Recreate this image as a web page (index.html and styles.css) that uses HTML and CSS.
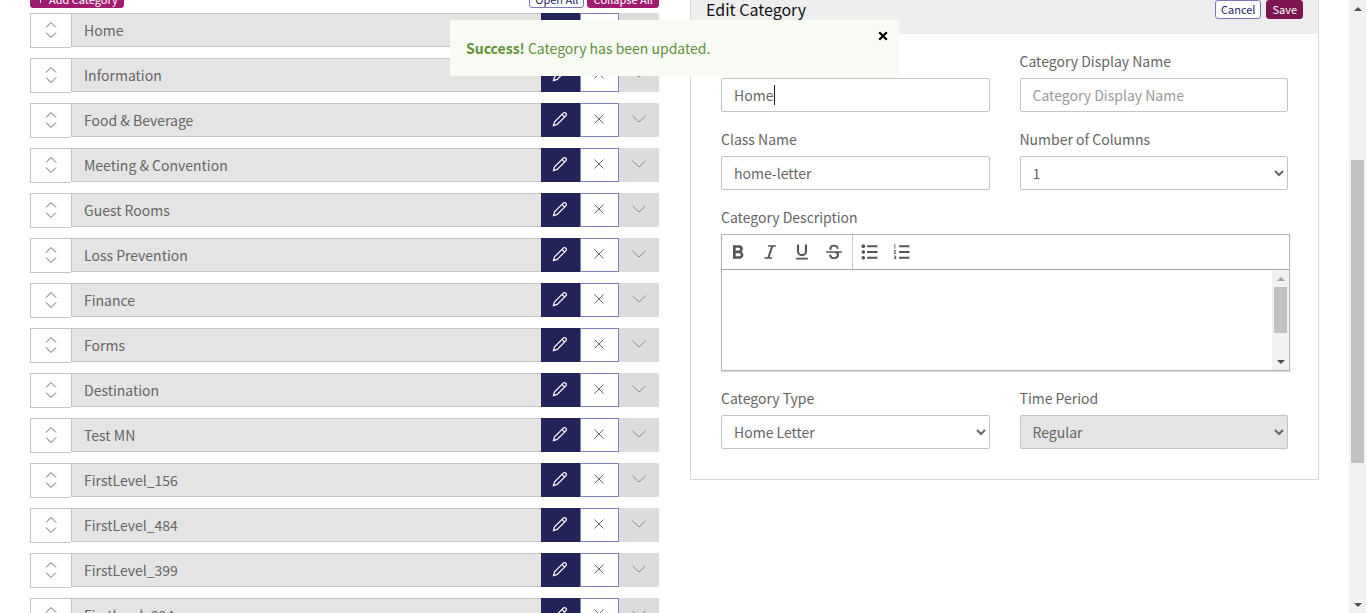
FILE: index.html
```html
<!DOCTYPE html>
<html lang="en">
<head>
<meta charset="utf-8">
<title>Edit Category</title>
<link rel="stylesheet" href="styles.css">
<script src="app.js" defer></script>
</head>
<body>
<svg class="sprite" aria-hidden="true">
  <symbol id="i-sort" viewBox="0 0 12 18"><path d="M1 6.500 6 1.500l5 5M1 11.500l5 5 5-5"/></symbol>
  <symbol id="i-pencil" viewBox="0 0 16 16"><path d="M1.500 14.500 2.600 10.800 11.200 2.200Q12.500.9 13.800 2.200 15.100 3.500 13.800 4.800L5.200 13.400ZM10 3.400l2.600 2.600"/></symbol>
  <symbol id="i-cross" viewBox="0 0 10 10"><path d="m.5.5 9 9M9.500.5l-9 9"/></symbol>
  <symbol id="i-down" viewBox="0 0 14 8"><path d="m.5.8 6.500 6.200L13.500.8"/></symbol>
</svg>
<div class="shell">
  <main class="columns">
    <section class="categories">
      <div class="toolbar">
        <button class="btn btn-magenta" type="button"><svg class="plus" viewBox="0 0 10 10"><path d="M5 0v10M0 5h10"/></svg>Add Category</button>
        <span class="toolbar-right">
          <button class="btn btn-outline" type="button">Open All</button>
          <button class="btn btn-magenta" type="button">Collapse All</button>
        </span>
      </div>
      <ul class="list" id="list"></ul>
    </section>
    <form class="panel">
      <header class="panel-head">
        <h2 class="panel-title">Edit Category</h2>
        <button class="btn btn-outline" type="button">Cancel</button>
        <button class="btn btn-plum" type="button">Save</button>
      </header>
      <div class="panel-body">
        <div class="field">
          <label for="name">Category Name</label>
          <span class="input-wrap"><input class="control" id="name" value="Home"><i class="caret"></i></span>
        </div>
        <div class="field">
          <label for="display">Category Display Name</label>
          <input class="control" id="display" placeholder="Category Display Name">
        </div>
        <div class="field">
          <label for="cls">Class Name</label>
          <input class="control" id="cls" value="home-letter">
        </div>
        <div class="field">
          <label for="cols">Number of Columns</label>
          <select class="control" id="cols"><option>1</option></select>
        </div>
        <div class="field field-wide">
          <label for="desc">Category Description</label>
          <div class="editor">
            <div class="editor-bar">
              <button type="button" class="tool" aria-label="Bold"><svg viewBox="0 0 24 24"><path d="M16.200 11.600c1-.8 1.600-1.900 1.600-3.100A4.500 4.500 0 0 0 13.300 4H6v16h8.200c2.400 0 4.200-1.900 4.200-4.300 0-1.800-.8-3.300-2.200-4.100zM9.200 6.800h3.600a1.700 1.700 0 0 1 0 3.500H9.200V6.800zm4.200 10.400H9.200v-3.800h4.200a1.900 1.900 0 0 1 0 3.800z"/></svg></button>
              <button type="button" class="tool" aria-label="Italic"><svg viewBox="0 0 24 24"><path d="M9.500 4v1.800h3.600L9 18.200H5.500V20h9v-1.800h-3l4.200-12.400H19V4z"/></svg></button>
              <button type="button" class="tool" aria-label="Underline"><svg viewBox="0 0 24 24"><path d="M12 17c3.300 0 6-2.700 6-6V3h-2.500v8a3.500 3.500 0 0 1-7 0V3H6v8c0 3.300 2.700 6 6 6zm-7 2v2h14v-2H5z"/></svg></button>
              <button type="button" class="tool" aria-label="Strikethrough"><svg viewBox="0 0 24 24"><path d="M6.600 9.200C5.700 5.800 8.300 3.300 12 3.300c3.300 0 5.700 1.900 5.700 4.900h-2.500c0-1.700-1.300-2.700-3.200-2.700-3.200 0-3.900 2.700-2 3.700H6.600zM21.500 13v-2h-19v2h10.200c1.900.6 2.800 1.300 2.800 2.700 0 1.500-1.300 2.500-3.300 2.500-2.200 0-3.500-1-3.600-3H6.100c0 3.500 2.800 5.300 6.100 5.300 3.500 0 5.900-1.900 5.900-4.800 0-1-.2-1.900-.7-2.700h4.100z"/></svg></button>
              <i class="divider"></i>
              <button type="button" class="tool" aria-label="Bulleted list"><svg viewBox="0 0 24 24"><circle cx="4" cy="5" r="2.200"/><circle cx="4" cy="12" r="2.200"/><circle cx="4" cy="19" r="2.200"/><path d="M8.500 3.800H21v2.400H8.500zM8.500 10.800H21v2.400H8.500zM8.500 17.800H21v2.400H8.500z"/></svg></button>
              <button type="button" class="tool" aria-label="Numbered list"><svg viewBox="0 0 24 24"><path d="M2 17.500h2v.5H3v1h1v.5H2v1h3v-4H2v1zm1-9.500h1V3H2v1h1v4zm-1 3h1.800L2 13.100v.9h3v-1H3.200L5 10.900V10H2v1zm6.500-7.200v2.400H21V3.800H8.500zm0 16.400H21v-2.400H8.500v2.400zm0-7H21v-2.400H8.500v2.400z"/></svg></button>
            </div>
            <div class="editor-main">
              <textarea class="editor-text" id="desc"></textarea>
              <div class="scrollbar" aria-hidden="true"><i class="arrow arrow-up arrow-off"></i><i class="thumb thumb-short"></i><i class="arrow arrow-down"></i></div>
            </div>
          </div>
        </div>
        <div class="field">
          <label for="type">Category Type</label>
          <select class="control" id="type"><option>Home Letter</option></select>
        </div>
        <div class="field">
          <label for="period">Time Period</label>
          <select class="control" id="period" disabled><option>Regular</option></select>
        </div>
      </div>
    </form>
  </main>
  <div class="scrollbar" aria-hidden="true"><i class="arrow arrow-up"></i><i class="track-before"></i><i class="thumb thumb-page"></i><i class="arrow arrow-down"></i></div>
</div>
<div class="toast" role="status">
  <p class="toast-text"><strong>Success!</strong> Category has been updated.</p>
  <button class="toast-close" type="button" aria-label="Close"><svg viewBox="0 0 10 10"><path d="m1.200 1.200 7.600 7.600M8.800 1.200 1.200 8.800"/></svg></button>
</div>
</body>
</html>
```
FILE: styles.css
```css
* { box-sizing: border-box; }
body {
  margin: 0;
  height: 100vh;
  overflow: hidden;
  background: #fff;
  color: #666;
  font: 14px/24px "Noto Sans CJK SC", "Open Sans", sans-serif;
}
button, input, select, textarea { font: inherit; color: inherit; margin: 0; }
button { cursor: pointer; }
svg { fill: none; stroke: currentColor; display: block; }
.sprite { display: none; }

.shell { display: grid; grid-template-columns: 1fr 17px; grid-template-rows: 100%; height: 100vh; overflow: hidden; }
.columns {
  display: grid;
  grid-template-columns: 1fr 1fr;
  gap: 31px;
  align-items: start;
  padding: 0 30px;
  min-width: 0;
}

/* buttons */
.btn {
  display: inline-flex;
  align-items: center;
  height: 19px;
  padding: 0 5px;
  border: 1px solid;
  border-radius: 3px;
  font-size: 11px;
  line-height: 16px;
  white-space: nowrap;
}
.btn-magenta { background: #a01c6e; border-color: #a01c6e; color: #fff; }
.btn-plum { background: #7d1550; border-color: #7d1550; color: #fff; }
.btn-outline { background: #fff; border-color: #7a78b4; color: #252460; }
.plus { width: 9px; height: 9px; margin-right: 4px; }

/* category list; the page is scrolled past the top of the toolbar */
.categories { margin-top: -11px; }
.toolbar { display: flex; justify-content: space-between; margin-bottom: 5px; }
.toolbar-right { display: flex; gap: 3px; }
.list { list-style: none; margin: 0; padding: 0; display: grid; gap: 10px; }
.row { display: grid; grid-template-columns: 41px 1fr 39px 39px 40px; height: 35px; align-items: start; }
.row > * { height: 34px; display: flex; align-items: center; justify-content: center; padding: 0 0 2px; border: 1px solid #c4c4c4; }
.row > .handle { height: 35px; background: #fff; border-right: 0; }
.handle svg { width: 12px; height: 18px; }
.row > .name { justify-content: flex-start; padding: 0 0 0 12px; background: #e4e4e4; border-right: 0; }
.row > .edit { padding-right: 2px; background: #232259; border-color: #232259; color: #fff; }
.edit svg { width: 16px; height: 16px; stroke-width: 1.2; }
.row > .remove { padding-right: 2px; background: #fff; border-color: #8280b8; color: #55555f; }
.remove svg { width: 10px; height: 10px; stroke-width: 0.9; }
.row > .toggle { background: #dcdcdc; border-color: #dcdcdc; color: #888; }
.toggle svg { width: 14px; height: 8px; }

/* edit panel */
.panel { margin-top: -17px; border: 1px solid #d9d9d9; }
.panel-head { display: flex; align-items: center; gap: 5px; height: 50px; padding: 0 15px; background: #eee; }
.panel-title { flex: 1; margin: 0; font-size: 16px; font-weight: 400; color: #111; }
.panel-body { display: grid; grid-template-columns: 1fr 1fr; gap: 16px 30px; padding: 16px 30px 30px; }
.field { display: grid; gap: 6px; min-width: 0; line-height: 22px; }
.field-wide { grid-column: 1 / -1; }
.control {
  width: 100%;
  height: 34px;
  padding: 0 12px;
  border: 1px solid #c4c4c4;
  border-radius: 2px;
  background: #fff;
  outline: 0;
}
select.control { padding: 0 0 0 8px; }
.control:disabled { background: #e4e4e4; color: #666; opacity: 1; }
.control::placeholder { color: #999; opacity: 1; }
.input-wrap { position: relative; display: block; }
.caret { position: absolute; left: 53px; top: 7px; width: 1px; height: 20px; background: #222; }

.editor { margin-right: -2px; border: 1px solid #b4b4b4; box-shadow: 0 1px 1px #ddd; }
.editor-bar { display: flex; align-items: center; height: 35px; border-bottom: 1px solid #a8a8a8; }
.tool { display: grid; place-items: center; width: 32px; height: 34px; padding: 0; border: 0; background: none; color: #555; }
.tool svg { width: 20px; height: 20px; fill: currentColor; stroke: none; }
.divider { width: 1px; height: 34px; margin: 0 1px 0 2px; background: #ccc; }
.editor-main { display: grid; grid-template-columns: 1fr 17px; height: 100px; }
.editor-text { border: 0; padding: 12px; resize: none; outline: 0; overflow: hidden; }

/* scrollbars */
.scrollbar { display: flex; flex-direction: column; align-items: center; background: #f1f1f1; min-height: 0; }
.arrow { width: 17px; height: 17px; display: grid; place-items: center; }
.arrow::before { content: ""; border: 4px solid transparent; }
.arrow-up::before { border-top: 0; border-bottom-color: #505050; }
.arrow-off::before { border-bottom-color: #a3a3a3; }
.arrow-down { margin-top: auto; }
.arrow-down::before { border-bottom: 0; border-top-color: #505050; }
.thumb { width: 13px; background: #c1c1c1; }
.thumb-short { height: 46%; }
.track-before { height: 23.4%; }
.thumb-page { height: 49.3%; }

/* notification */
.toast {
  position: fixed;
  top: 20px;
  left: 50%;
  transform: translateX(-233px);
  width: 449px;
  display: flex;
  justify-content: space-between;
  align-items: flex-start;
  padding: 16px;
  padding-right: 11px;
  background: #f7fbf4;
  color: #5f9138;
}
.toast-text { margin: 0; }
.toast-close { padding: 0; margin-top: -5px; border: 0; background: none; color: #000; }
.toast-close svg { width: 10px; height: 10px; stroke-width: 2.2; }
```
FILE: app.js
```javascript
const names = ["Home", "Information", "Food & Beverage", "Meeting & Convention", "Guest Rooms",
  "Loss Prevention", "Finance", "Forms", "Destination", "Test MN",
  "FirstLevel_156", "FirstLevel_484", "FirstLevel_399", "Firstlevel_324"];
const icon = (id) => `<svg aria-hidden="true"><use href="#i-${id}"/></svg>`;
const list = document.getElementById("list");
for (const name of names) {
  const row = document.createElement("li");
  row.className = "row";
  row.innerHTML = `
    <button class="handle" type="button" aria-label="Reorder">${icon("sort")}</button>
    <span class="name"></span>
    <button class="edit" type="button" aria-label="Edit">${icon("pencil")}</button>
    <button class="remove" type="button" aria-label="Remove">${icon("cross")}</button>
    <button class="toggle" type="button" aria-label="Expand">${icon("down")}</button>`;
  row.querySelector(".name").textContent = name;
  list.append(row);
}
```
